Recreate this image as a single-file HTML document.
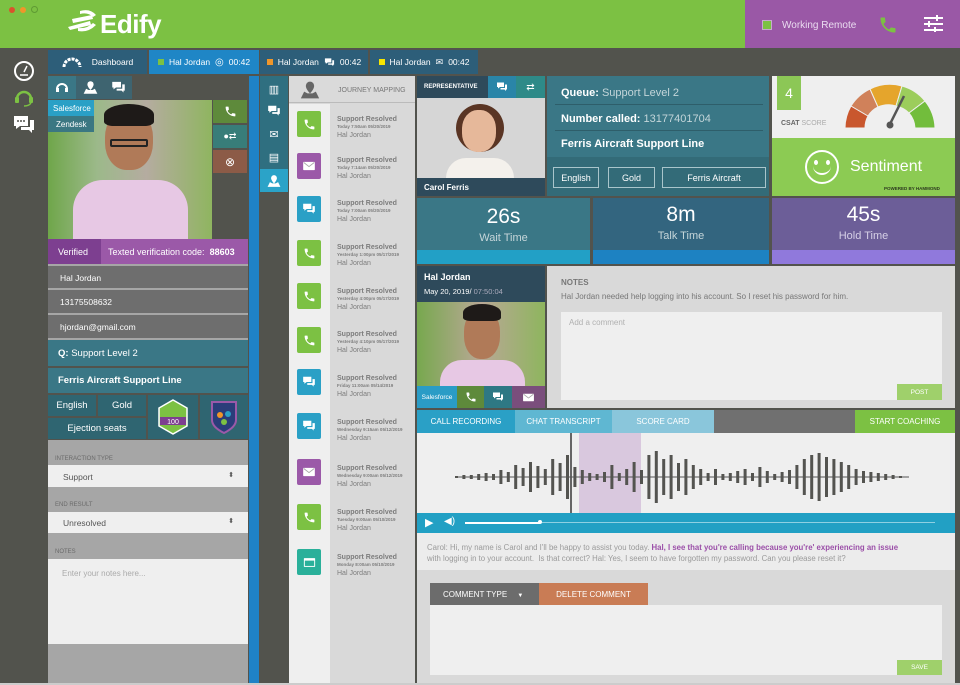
<!DOCTYPE html>
<html><head><meta charset="utf-8">
<style>
*{margin:0;padding:0;box-sizing:border-box}
body{width:960px;height:685px;overflow:hidden;background:#52534d;font-family:"Liberation Sans",sans-serif;position:relative}
.a{position:absolute}
.c{display:flex;align-items:center;justify-content:center}
.w{color:#fff}
.it{position:absolute;left:297px;width:24px;height:26px;border-radius:2px;display:flex;align-items:center;justify-content:center}
.tx{position:absolute;left:337px;color:#7d7d7d;line-height:1}
.tx b{font-size:7px;display:block}
.tx i{font-style:normal;font-size:4.5px;display:block;margin-top:2px;font-weight:bold}
.tx span{font-size:7px;display:block;margin-top:2px}
svg.i{fill:#fff}
</style></head><body>
<svg width="0" height="0" style="position:absolute"><defs>
<symbol id="ph" viewBox="0 0 24 24"><path d="M6.6 10.8c1.4 2.8 3.8 5.1 6.6 6.6l2.2-2.2c.3-.3.7-.4 1-.2 1.1.4 2.3.6 3.6.6.6 0 1 .4 1 1V20c0 .6-.4 1-1 1C10.6 21 3 13.4 3 4c0-.6.4-1 1-1h3.5c.6 0 1 .4 1 1 0 1.3.2 2.5.6 3.6.1.3 0 .7-.2 1z"/></symbol>
<symbol id="ch" viewBox="0 0 24 24"><path d="M2 3h14v9H8l-4 3v-3H2z"/><path d="M18 7h4v10h-2v3l-3-3H9v-3h9z"/></symbol>
<symbol id="ml" viewBox="0 0 24 24"><rect x="2" y="5" width="20" height="14" rx="1"/><path d="M3 6l9 7 9-7" fill="none" stroke="#000" stroke-opacity=".35" stroke-width="1.5"/></symbol>
<symbol id="map" viewBox="0 0 24 24"><path d="M12 2a5 5 0 0 1 5 5c0 4-5 9-5 9s-5-5-5-9a5 5 0 0 1 5-5z"/><path d="M1 22l4-8 4 2 3 0 3 0 4-2 4 8z"/></symbol>
<symbol id="win" viewBox="0 0 24 24"><rect x="3" y="5" width="18" height="14" rx="1"/><rect x="4.5" y="9" width="15" height="8.5" fill="#2ab09a"/></symbol>
</defs></svg>
<!-- header -->
<div class="a" style="left:0;top:0;width:960px;height:48px;background:#7cc143"></div>
<div class="a" style="left:9px;top:7px;width:6px;height:6px;border-radius:50%;background:#d9532c"></div>
<div class="a" style="left:20px;top:7px;width:6px;height:6px;border-radius:50%;background:#f0962a"></div>
<div class="a" style="left:31px;top:6px;width:7px;height:7px;border-radius:50%;border:1px solid #5f9a33"></div>
<svg class="a" style="left:66px;top:9px" width="34" height="24" viewBox="0 0 34 24"><g fill="#fff"><path d="M14 2 Q24 -1 30 6 L27 8 Q22 3 14 5Z"/><path d="M6 10 L26 6 L27 10 L7 14Z"/><path d="M2 18 L24 12 L25 16 L4 21Z"/><path d="M12 22 Q22 24 30 16 L27 14 Q21 20 12 19Z"/></g></svg>
<div class="a w" style="left:100px;top:9px;font-size:26px;font-weight:bold;letter-spacing:-0.5px">Edify</div>
<div class="a" style="left:745px;top:0;width:215px;height:48px;background:#9a58a6"></div>
<div class="a" style="left:762px;top:20px;width:10px;height:10px;background:#7cc143;border:1px solid #c8a8d0"></div>
<div class="a" style="left:782px;top:20px;font-size:10px;color:#eadcf0">Working Remote</div>
<svg class="a" style="left:878px;top:15px;fill:#7cc143" width="20" height="20"><use href="#ph"/></svg>
<svg class="a" style="left:924px;top:15px" width="19" height="17"><g stroke="#fff" stroke-width="2"><line x1="0" y1="3" x2="19" y2="3"/><line x1="0" y1="9" x2="19" y2="9"/><line x1="0" y1="15" x2="19" y2="15"/><line x1="13" y1="0" x2="13" y2="6"/><line x1="5" y1="6" x2="5" y2="12"/><line x1="11" y1="12" x2="11" y2="17"/></g></svg>

<!-- left nav -->
<svg class="a" style="left:13px;top:60px" width="22" height="22"><circle cx="11" cy="11" r="9" fill="none" stroke="#fff" stroke-width="2"/><line x1="11" y1="12" x2="14" y2="6" stroke="#fff" stroke-width="1.5"/><line x1="7" y1="15" x2="15" y2="15" stroke="#fff" stroke-width="1.5"/></svg>
<svg class="a" style="left:13px;top:86px" width="22" height="22"><path d="M4 13 A7 7 0 1 1 18 13" fill="none" stroke="#7cc143" stroke-width="2.5"/><rect x="2" y="11" width="4" height="6" rx="1" fill="#7cc143"/><rect x="16" y="11" width="4" height="6" rx="1" fill="#7cc143"/><path d="M18 17 Q16 20 11 20" stroke="#7cc143" fill="none" stroke-width="1.5"/></svg>
<svg class="a" style="left:13px;top:114px" width="22" height="22"><path d="M1 2h14v10H7l-4 3v-3H1z" fill="#fff"/><path d="M17 6h4v10h-2v3l-3-3H8v-3h9z" fill="#fff"/><g fill="#52534d"><circle cx="5" cy="7" r="1"/><circle cx="8" cy="7" r="1"/><circle cx="11" cy="7" r="1"/></g></svg>

<!-- tabs -->
<div class="a c w" style="left:48px;top:50px;width:99px;height:24px;background:#2d5e79;font-size:8.5px"><svg width="20" height="10" style="margin-right:10px"><path d="M2 10 A8 8 0 0 1 18 10" fill="none" stroke="#fff" stroke-width="3" stroke-dasharray="3 1"/></svg>Dashboard</div>
<div class="a c w" style="left:149px;top:50px;width:110px;height:24px;background:#1f86c6;font-size:8.5px"><span style="width:6px;height:6px;background:#7cc143;margin-right:5px"></span>Hal Jordan <span style="margin:0 5px;font-size:10px">◎</span>00:42</div>
<div class="a c w" style="left:260px;top:50px;width:108px;height:24px;background:#2d5e79;font-size:8.5px"><span style="width:6px;height:6px;background:#f0962a;margin-right:5px"></span>Hal Jordan <svg class="i" width="11" height="11" style="margin:0 5px"><use href="#ch"/></svg>00:42</div>
<div class="a c w" style="left:370px;top:50px;width:108px;height:24px;background:#2d5e79;font-size:8.5px"><span style="width:6px;height:6px;background:#f7e500;margin-right:5px"></span>Hal Jordan <span style="margin:0 5px;font-size:9px">✉</span>00:42</div>

<!-- left panel -->
<div class="a" style="left:48px;top:76px;width:28px;height:23px;background:#3a7786"></div>
<div class="a" style="left:76px;top:76px;width:56px;height:23px;background:#3e6470"></div>
<svg class="a" style="left:54px;top:80px" width="16" height="16"><path d="M3 9 A5 5 0 1 1 13 9" fill="none" stroke="#fff" stroke-width="2"/><rect x="2" y="8" width="3" height="4" fill="#fff"/><rect x="11" y="8" width="3" height="4" fill="#fff"/></svg>
<svg class="a i" style="left:83px;top:80px" width="15" height="15"><use href="#map"/></svg>
<svg class="a i" style="left:111px;top:80px" width="15" height="15"><use href="#ch"/></svg>
<div class="a" style="left:48px;top:100px;width:164px;height:139px;background:linear-gradient(90deg,#6fa64a 0%,#9cb98a 30%,#b5aca0 60%,#8fb560 100%)"></div>
<div class="a" style="left:105px;top:110px;width:48px;height:60px;border-radius:45%;background:#b07a58"></div>
<div class="a" style="left:104px;top:104px;width:50px;height:22px;border-radius:50% 50% 20% 20%;background:#1e1a18"></div>
<div class="a" style="left:110px;top:139px;width:38px;height:8px;border:2px solid #222;border-radius:2px"></div>
<div class="a" style="left:73px;top:180px;width:115px;height:59px;border-radius:30px 30px 0 0;background:#e7c8e4"></div>
<div class="a w" style="left:48px;top:100px;width:46px;height:16px;background:#2aa0c6;font-size:8px;padding:4px 5px">Salesforce</div>
<div class="a w" style="left:48px;top:116px;width:46px;height:16px;background:#3b7782;font-size:8px;padding:4px 8px">Zendesk</div>
<div class="a c" style="left:213px;top:100px;width:34px;height:23px;background:#5e8a3b"><svg class="i" width="13" height="13"><use href="#ph"/></svg></div>
<div class="a c w" style="left:213px;top:125px;width:34px;height:23px;background:#387d79;font-size:9px">●⇄</div>
<div class="a c w" style="left:213px;top:150px;width:34px;height:23px;background:#8c5b47;font-size:12px">⊗</div>
<div class="a w" style="left:48px;top:239px;width:53px;height:25px;background:#7d3f90;font-size:9px;padding:8px 10px">Verified</div>
<div class="a w" style="left:101px;top:239px;width:147px;height:25px;background:#9b59a8;font-size:9px;padding:8px 7px">Texted verification code: &nbsp;<b>88603</b></div>
<div class="a" style="left:48px;top:264px;width:200px;height:76px;background:#a6a6a6"></div>
<div class="a w" style="left:48px;top:266px;width:200px;height:22px;background:#6e6e6e;font-size:8.5px;padding:7px 12px">Hal Jordan</div>
<div class="a w" style="left:48px;top:290px;width:200px;height:23px;background:#6e6e6e;font-size:8.5px;padding:7px 12px">13175508632</div>
<div class="a w" style="left:48px;top:315px;width:200px;height:23px;background:#6e6e6e;font-size:8.5px;padding:7px 12px">hjordan@gmail.com</div>
<div class="a w" style="left:48px;top:340px;width:200px;height:26px;background:#3a7786;font-size:9.5px;padding:8px 10px"><b>Q:</b> Support Level 2</div>
<div class="a w" style="left:48px;top:368px;width:200px;height:25px;background:#3a7786;font-size:9.5px;padding:7px 10px;font-weight:bold">Ferris Aircraft Support Line</div>
<div class="a c w" style="left:48px;top:395px;width:48px;height:21px;background:#2f6571;font-size:9.5px">English</div>
<div class="a c w" style="left:98px;top:395px;width:48px;height:21px;background:#2f6571;font-size:9.5px">Gold</div>
<div class="a c w" style="left:48px;top:418px;width:98px;height:21px;background:#2f6571;font-size:9.5px">Ejection seats</div>
<div class="a" style="left:148px;top:395px;width:50px;height:44px;background:#2f6571"></div>
<div class="a" style="left:200px;top:395px;width:48px;height:44px;background:#2f6571"></div>
<svg class="a" style="left:157px;top:399px" width="32" height="36"><polygon points="16,1 30,9 30,27 16,35 2,27 2,9" fill="#7cc143" stroke="#fff" stroke-width="1.5"/><rect x="3" y="18" width="26" height="8" fill="#7d3f90"/><text x="16" y="25" font-size="7" fill="#fff" text-anchor="middle" font-family="Liberation Sans">100</text></svg>
<svg class="a" style="left:210px;top:400px" width="28" height="34"><path d="M2 2h24v18c0 6-6 10-12 13C8 30 2 26 2 20z" fill="#2a3d7a" stroke="#9b59a8" stroke-width="2"/><circle cx="10" cy="15" r="3" fill="#f0962a"/><circle cx="18" cy="14" r="3" fill="#2aa0c6"/><circle cx="14" cy="22" r="3" fill="#7cc143"/></svg>
<div class="a" style="left:48px;top:440px;width:200px;height:245px;background:#a6a6a6"></div>
<div class="a" style="left:55px;top:456px;font-size:6px;color:#6a6a6a">INTERACTION TYPE</div>
<div class="a" style="left:48px;top:465px;width:200px;height:22px;background:#efefef;font-size:8.5px;color:#555;padding:7px 15px">Support<span style="position:absolute;right:14px;top:6px;font-size:7px">⬍</span></div>
<div class="a" style="left:55px;top:502px;font-size:6px;color:#6a6a6a">END RESULT</div>
<div class="a" style="left:48px;top:512px;width:200px;height:21px;background:#efefef;font-size:8.5px;color:#555;padding:6px 15px">Unresolved<span style="position:absolute;right:14px;top:5px;font-size:7px">⬍</span></div>
<div class="a" style="left:55px;top:549px;font-size:6px;color:#6a6a6a">NOTES</div>
<div class="a" style="left:48px;top:559px;width:200px;height:85px;background:#efefef;font-size:8px;color:#aaa;padding:10px 14px">Enter your notes here...</div>

<!-- blue strip / icon column -->
<div class="a" style="left:249px;top:76px;width:10px;height:609px;background:#1f82c6"></div>
<div class="a" style="left:260px;top:76px;width:28px;height:116px;background:#2f6f80"></div>
<div class="a c w" style="left:260px;top:78px;width:28px;height:22px;font-size:11px">▥</div>
<div class="a c" style="left:260px;top:100px;width:28px;height:22px"><svg class="i" width="14" height="14"><use href="#ch"/></svg></div>
<div class="a c w" style="left:260px;top:123px;width:28px;height:22px;font-size:11px">✉</div>
<div class="a c w" style="left:260px;top:146px;width:28px;height:22px;font-size:11px">▤</div>
<div class="a c" style="left:260px;top:169px;width:28px;height:23px;background:#2ba3c8"><svg class="i" width="14" height="14"><use href="#map"/></svg></div>

<!-- journey -->
<div class="a" style="left:289px;top:76px;width:126px;height:609px;background:#d9d9d9"></div>
<div class="a" style="left:289px;top:104px;width:41px;height:581px;background:#efefef"></div>
<div class="a" style="left:289px;top:76px;width:126px;height:27px;background:#dadada;border-bottom:1px solid #bbb"></div>
<svg class="a" style="left:299px;top:80px;fill:#666" width="22" height="20"><use href="#map"/></svg>
<div class="a" style="left:338px;top:87px;font-size:7px;color:#777">JOURNEY MAPPING</div>

<div class="it" style="top:111px;background:#7cc143"><svg class="i" width="13" height="13"><use href="#ph"/></svg></div>
<div class="tx" style="top:116px"><b>Support Resolved</b><i>Today 7:50am 05/20/2019</i><span>Hal Jordan</span></div>
<div class="it" style="top:153px;background:#9b59a8"><svg class="i" width="14" height="14"><use href="#ml"/></svg></div>
<div class="tx" style="top:157px"><b>Support Resolved</b><i>Today 7:14am 05/20/2019</i><span>Hal Jordan</span></div>
<div class="it" style="top:196px;background:#2aa0c6"><svg class="i" width="14" height="14"><use href="#ch"/></svg></div>
<div class="tx" style="top:200px"><b>Support Resolved</b><i>Today 7:00am 05/20/2019</i><span>Hal Jordan</span></div>
<div class="it" style="top:240px;background:#7cc143"><svg class="i" width="13" height="13"><use href="#ph"/></svg></div>
<div class="tx" style="top:244px"><b>Support Resolved</b><i>Yesterday 1:00pm 05/17/2019</i><span>Hal Jordan</span></div>
<div class="it" style="top:283px;background:#7cc143"><svg class="i" width="13" height="13"><use href="#ph"/></svg></div>
<div class="tx" style="top:288px"><b>Support Resolved</b><i>Yesterday 4:00pm 05/17/2019</i><span>Hal Jordan</span></div>
<div class="it" style="top:327px;background:#7cc143"><svg class="i" width="13" height="13"><use href="#ph"/></svg></div>
<div class="tx" style="top:331px"><b>Support Resolved</b><i>Yesterday 4:10pm 05/17/2019</i><span>Hal Jordan</span></div>
<div class="it" style="top:369px;background:#2aa0c6"><svg class="i" width="14" height="14"><use href="#ch"/></svg></div>
<div class="tx" style="top:375px"><b>Support Resolved</b><i>Friday 11:00am 05/14/2019</i><span>Hal Jordan</span></div>
<div class="it" style="top:413px;background:#2aa0c6"><svg class="i" width="14" height="14"><use href="#ch"/></svg></div>
<div class="tx" style="top:419px"><b>Support Resolved</b><i>Wednesday 9:15am 05/12/2019</i><span>Hal Jordan</span></div>
<div class="it" style="top:459px;background:#9b59a8"><svg class="i" width="14" height="14"><use href="#ml"/></svg></div>
<div class="tx" style="top:465px"><b>Support Resolved</b><i>Wednesday 9:00am 05/12/2019</i><span>Hal Jordan</span></div>
<div class="it" style="top:504px;background:#7cc143"><svg class="i" width="13" height="13"><use href="#ph"/></svg></div>
<div class="tx" style="top:509px"><b>Support Resolved</b><i>Tuesday 9:00am 05/10/2019</i><span>Hal Jordan</span></div>
<div class="it" style="top:549px;background:#2ab09a"><svg class="i" width="15" height="15"><use href="#win"/></svg></div>
<div class="tx" style="top:554px"><b>Support Resolved</b><i>Monday 8:00am 05/10/2019</i><span>Hal Jordan</span></div>

<!-- representative -->
<div class="a w" style="left:417px;top:76px;width:71px;height:22px;background:#2e4a5b;font-size:6px;font-weight:bold;padding:8px 7px">REPRESENTATIVE</div>
<div class="a c" style="left:488px;top:76px;width:28px;height:22px;background:#2a85a8"><svg class="i" width="12" height="12"><use href="#ch"/></svg></div>
<div class="a c w" style="left:516px;top:76px;width:29px;height:22px;background:#2e8a88;font-size:10px">⇄</div>
<div class="a" style="left:417px;top:98px;width:128px;height:80px;background:#d6d6d6"></div>
<div class="a" style="left:456px;top:104px;width:48px;height:48px;border-radius:50%;background:#5a3524"></div>
<div class="a" style="left:462px;top:110px;width:34px;height:42px;border-radius:45%;background:#e6b89a"></div>
<div class="a" style="left:446px;top:158px;width:68px;height:20px;border-radius:20px 20px 0 0;background:#f4f1ec"></div>
<div class="a w" style="left:417px;top:178px;width:128px;height:18px;background:#2e4a5b;font-size:8px;padding:5px 7px;font-weight:bold">Carol Ferris</div>

<div class="a" style="left:547px;top:76px;width:222px;height:120px;background:#3a7786"></div>
<div class="a" style="left:547px;top:157px;width:222px;height:39px;background:#336b78"></div>
<div class="a w" style="left:561px;top:87px;font-size:11px"><b>Queue:</b> <span style="color:#c4d6da">Support Level 2</span></div>
<div class="a" style="left:555px;top:104px;width:208px;height:1px;background:#2e5e6a"></div>
<div class="a w" style="left:561px;top:113px;font-size:11px"><b>Number called:</b> <span style="color:#c4d6da">13177401704</span></div>
<div class="a" style="left:555px;top:130px;width:208px;height:1px;background:#2e5e6a"></div>
<div class="a w" style="left:561px;top:138px;font-size:11px;font-weight:bold">Ferris Aircraft Support Line</div>
<div class="a c w" style="left:553px;top:167px;width:46px;height:21px;border:1px solid #a9c5cb;font-size:9px">English</div>
<div class="a c w" style="left:608px;top:167px;width:47px;height:21px;border:1px solid #a9c5cb;font-size:9px">Gold</div>
<div class="a c w" style="left:662px;top:167px;width:104px;height:21px;border:1px solid #a9c5cb;font-size:9px">Ferris Aircraft</div>

<div class="a" style="left:772px;top:76px;width:183px;height:62px;background:#efefef"></div>
<div class="a c w" style="left:777px;top:76px;width:24px;height:34px;background:#8cc756;font-size:14px">4</div>
<div class="a" style="left:781px;top:120px;font-size:7px;color:#666"><b>CSAT</b> <span style="color:#aaa">SCORE</span></div>
<svg class="a" style="left:840px;top:82px" width="100" height="50" viewBox="0 0 100 50"><g stroke="#efefef" stroke-width="1"><path d="M5 46 A45 45 0 0 1 11 24 L28 34 A25 25 0 0 0 25 46Z" fill="#c9572e"/><path d="M11 24 A45 45 0 0 1 30 7 L38 25 A25 25 0 0 0 28 34Z" fill="#d0815a"/><path d="M30 7 A45 45 0 0 1 62 4 L56 24 A25 25 0 0 0 38 25Z" fill="#e5a52c"/><path d="M62 4 A45 45 0 0 1 85 19 L69 31 A25 25 0 0 0 56 24Z" fill="#9ccd5c"/><path d="M85 19 A45 45 0 0 1 95 46 L75 46 A25 25 0 0 0 69 31Z" fill="#72bd3c"/></g><line x1="50" y1="42" x2="64" y2="14" stroke="#555" stroke-width="2.5"/><circle cx="50" cy="43" r="3.5" fill="#555"/></svg>
<div class="a" style="left:772px;top:138px;width:183px;height:58px;background:#8ccb53"></div>
<div class="a" style="left:805px;top:150px;width:34px;height:34px;border:2.5px solid #fff;border-radius:50%"></div>
<div class="a" style="left:814px;top:160px;width:4px;height:5px;background:#fff;border-radius:50%"></div>
<div class="a" style="left:826px;top:160px;width:4px;height:5px;background:#fff;border-radius:50%"></div>
<div class="a" style="left:813px;top:166px;width:18px;height:9px;border-bottom:2px solid #fff;border-radius:0 0 10px 10px"></div>
<div class="a w" style="left:850px;top:158px;font-size:16px">Sentiment</div>
<div class="a" style="left:884px;top:186px;font-size:4.5px;color:#2d3a20;font-weight:bold">POWERED BY HAMMOND</div>

<!-- stats -->
<div class="a" style="left:417px;top:198px;width:173px;height:66px;background:#3a7786"></div>
<div class="a" style="left:417px;top:250px;width:173px;height:14px;background:#22a0c6"></div>
<div class="a w" style="left:417px;top:205px;width:173px;text-align:center;font-size:21px">26s</div>
<div class="a" style="left:417px;top:232px;width:173px;text-align:center;font-size:11px;color:#c6d6da">Wait Time</div>
<div class="a" style="left:593px;top:198px;width:176px;height:66px;background:#33657f"></div>
<div class="a" style="left:593px;top:250px;width:176px;height:14px;background:#1d82c2"></div>
<div class="a w" style="left:593px;top:203px;width:176px;text-align:center;font-size:21px">8m</div>
<div class="a" style="left:593px;top:230px;width:176px;text-align:center;font-size:11px;color:#c6d6da">Talk Time</div>
<div class="a" style="left:772px;top:198px;width:183px;height:66px;background:#6c5e98"></div>
<div class="a" style="left:772px;top:250px;width:183px;height:14px;background:#9079dc"></div>
<div class="a w" style="left:772px;top:203px;width:183px;text-align:center;font-size:21px">45s</div>
<div class="a" style="left:772px;top:230px;width:183px;text-align:center;font-size:11px;color:#d6d0e6">Hold Time</div>

<!-- hal card -->
<div class="a" style="left:417px;top:266px;width:128px;height:36px;background:#2e4a5b"></div>
<div class="a w" style="left:424px;top:272px;font-size:9px;font-weight:bold">Hal Jordan</div>
<div class="a w" style="left:424px;top:287px;font-size:7.5px">May 20, 2019/ <span style="color:#aab">07:50:04</span></div>
<div class="a" style="left:417px;top:302px;width:128px;height:84px;background:linear-gradient(90deg,#77a84e,#b9a896 50%,#8eb55e)"></div>
<div class="a" style="left:464px;top:309px;width:36px;height:50px;border-radius:45%;background:#b07a58"></div>
<div class="a" style="left:463px;top:304px;width:38px;height:17px;border-radius:50% 50% 20% 20%;background:#1e1a18"></div>
<div class="a" style="left:440px;top:360px;width:85px;height:26px;border-radius:22px 22px 0 0;background:#e7c8e4"></div>
<div class="a c w" style="left:417px;top:386px;width:40px;height:22px;background:#2a9cc6;font-size:6.5px">Salesforce</div>
<div class="a c" style="left:457px;top:386px;width:27px;height:22px;background:#5e8a3b"><svg class="i" width="12" height="12"><use href="#ph"/></svg></div>
<div class="a c" style="left:484px;top:386px;width:28px;height:22px;background:#2e7884"><svg class="i" width="12" height="12"><use href="#ch"/></svg></div>
<div class="a c" style="left:512px;top:386px;width:33px;height:22px;background:#7a4e7c"><svg class="i" width="13" height="13"><use href="#ml"/></svg></div>

<div class="a" style="left:547px;top:266px;width:408px;height:142px;background:#d9d9d9"></div>
<div class="a" style="left:561px;top:278px;font-size:8px;color:#777;font-weight:bold">NOTES</div>
<div class="a" style="left:561px;top:292px;font-size:8px;color:#777">Hal Jordan needed help logging into his account. So I reset his password for him.</div>
<div class="a" style="left:561px;top:312px;width:381px;height:88px;background:#efefef;font-size:8px;color:#b0b0b0;padding:6px 8px">Add a comment</div>
<div class="a c w" style="left:897px;top:384px;width:45px;height:16px;background:#9fd06b;font-size:6.5px">POST</div>

<!-- tabs -->
<div class="a c w" style="left:417px;top:410px;width:98px;height:23px;background:#2aa0c6;font-size:8px">CALL RECORDING</div>
<div class="a c w" style="left:515px;top:410px;width:97px;height:23px;background:#5fb7d2;font-size:8px">CHAT TRANSCRIPT</div>
<div class="a c w" style="left:612px;top:410px;width:102px;height:23px;background:#8ac6db;font-size:8px">SCORE CARD</div>
<div class="a" style="left:714px;top:410px;width:141px;height:23px;background:#707070"></div>
<div class="a c w" style="left:855px;top:410px;width:100px;height:23px;background:#7cc143;font-size:8px">START COACHING</div>

<!-- waveform -->
<div class="a" style="left:417px;top:433px;width:538px;height:80px;background:#efefef"></div>
<svg class="a" style="left:417px;top:433px" width="538" height="80">
<rect x="162" y="0" width="62" height="80" fill="#d9c8de"/>
<rect x="153" y="0" width="2" height="80" fill="#666"/>
<rect x="38" y="43.5" width="454" height="1" fill="#555"/>
<g fill="#545450" transform="translate(0,44)">
<rect x="38" y="-1" width="3" height="2"/><rect x="45.4" y="-2" width="3" height="4"/><rect x="52.8" y="-2" width="3" height="4"/><rect x="60.2" y="-3" width="3" height="6"/><rect x="67.6" y="-4" width="3" height="8"/><rect x="75" y="-3" width="3" height="6"/><rect x="82.4" y="-7" width="3" height="14"/><rect x="89.8" y="-5" width="3" height="10"/><rect x="97.2" y="-12" width="3" height="24"/><rect x="104.6" y="-9" width="3" height="18"/><rect x="112" y="-15" width="3" height="30"/><rect x="119.4" y="-11" width="3" height="22"/><rect x="126.8" y="-8" width="3" height="16"/><rect x="134.2" y="-18" width="3" height="36"/><rect x="141.6" y="-14" width="3" height="28"/><rect x="149" y="-22" width="3" height="44"/><rect x="156.4" y="-10" width="3" height="20"/><rect x="163.8" y="-7" width="3" height="14"/><rect x="171.2" y="-4" width="3" height="8"/><rect x="178.6" y="-3" width="3" height="6"/><rect x="186" y="-5" width="3" height="10"/><rect x="193.4" y="-12" width="3" height="24"/><rect x="200.8" y="-4" width="3" height="8"/><rect x="208.2" y="-8" width="3" height="16"/><rect x="215.6" y="-15" width="3" height="30"/><rect x="223" y="-7" width="3" height="14"/><rect x="230.4" y="-22" width="3" height="44"/><rect x="237.8" y="-26" width="3" height="52"/><rect x="245.2" y="-18" width="3" height="36"/><rect x="252.6" y="-22" width="3" height="44"/><rect x="260" y="-14" width="3" height="28"/><rect x="267.4" y="-18" width="3" height="36"/><rect x="274.8" y="-12" width="3" height="24"/><rect x="282.2" y="-8" width="3" height="16"/><rect x="289.6" y="-4" width="3" height="8"/><rect x="297" y="-8" width="3" height="16"/><rect x="304.4" y="-3" width="3" height="6"/><rect x="311.8" y="-4" width="3" height="8"/><rect x="319.2" y="-6" width="3" height="12"/><rect x="326.6" y="-8" width="3" height="16"/><rect x="334" y="-4" width="3" height="8"/><rect x="341.4" y="-10" width="3" height="20"/><rect x="348.8" y="-6" width="3" height="12"/><rect x="356.2" y="-3" width="3" height="6"/><rect x="363.6" y="-5" width="3" height="10"/><rect x="371" y="-7" width="3" height="14"/><rect x="378.4" y="-12" width="3" height="24"/><rect x="385.8" y="-18" width="3" height="36"/><rect x="393.2" y="-22" width="3" height="44"/><rect x="400.6" y="-24" width="3" height="48"/><rect x="408" y="-20" width="3" height="40"/><rect x="415.4" y="-18" width="3" height="36"/><rect x="422.8" y="-15" width="3" height="30"/><rect x="430.2" y="-12" width="3" height="24"/><rect x="437.6" y="-8" width="3" height="16"/><rect x="445" y="-6" width="3" height="12"/><rect x="452.4" y="-5" width="3" height="10"/><rect x="459.8" y="-4" width="3" height="8"/><rect x="467.2" y="-3" width="3" height="6"/><rect x="474.6" y="-2" width="3" height="4"/><rect x="482" y="-1" width="3" height="2"/>
</g></svg>
<div class="a" style="left:417px;top:513px;width:538px;height:20px;background:#22a0c4"></div>
<div class="a w" style="left:425px;top:516px;font-size:11px">▶</div>
<div class="a w" style="left:444px;top:516px;font-size:10px">◀)</div>
<div class="a" style="left:465px;top:522px;width:75px;height:1.5px;background:#fff"></div>
<div class="a" style="left:538px;top:520px;width:4px;height:4px;border-radius:50%;background:#fff"></div>
<div class="a" style="left:542px;top:522px;width:393px;height:1px;background:#8fd0e2"></div>
<div class="a" style="left:417px;top:533px;width:538px;height:37px;background:#ececec"></div>
<div class="a" style="left:427px;top:542px;width:500px;font-size:7.8px;line-height:11px;color:#9a9a9a">Carol: Hi, my name is Carol and I'll be happy to assist you today. <b style="color:#9b4fa8">Hal, I see that you're calling because you're' experiencing an issue</b><br>with logging in to your account.&nbsp; Is that correct? Hal: Yes, I seem to have forgotten my password. Can you please reset it?</div>
<div class="a" style="left:417px;top:570px;width:538px;height:113px;background:#d9d9d9"></div>
<div class="a w" style="left:430px;top:583px;width:109px;height:22px;background:#6c6c6c;font-size:8px;padding:7px 13px">COMMENT TYPE <span style="margin-left:8px;font-size:6px">▼</span></div>
<div class="a c w" style="left:539px;top:583px;width:109px;height:22px;background:#c97c55;font-size:8px">DELETE COMMENT</div>
<div class="a" style="left:430px;top:605px;width:512px;height:70px;background:#efefef"></div>
<div class="a c w" style="left:897px;top:660px;width:45px;height:15px;background:#9fd06b;font-size:6.5px">SAVE</div>
<div class="a" style="left:0;top:683px;width:960px;height:2px;background:#ccc"></div>
</body></html>
